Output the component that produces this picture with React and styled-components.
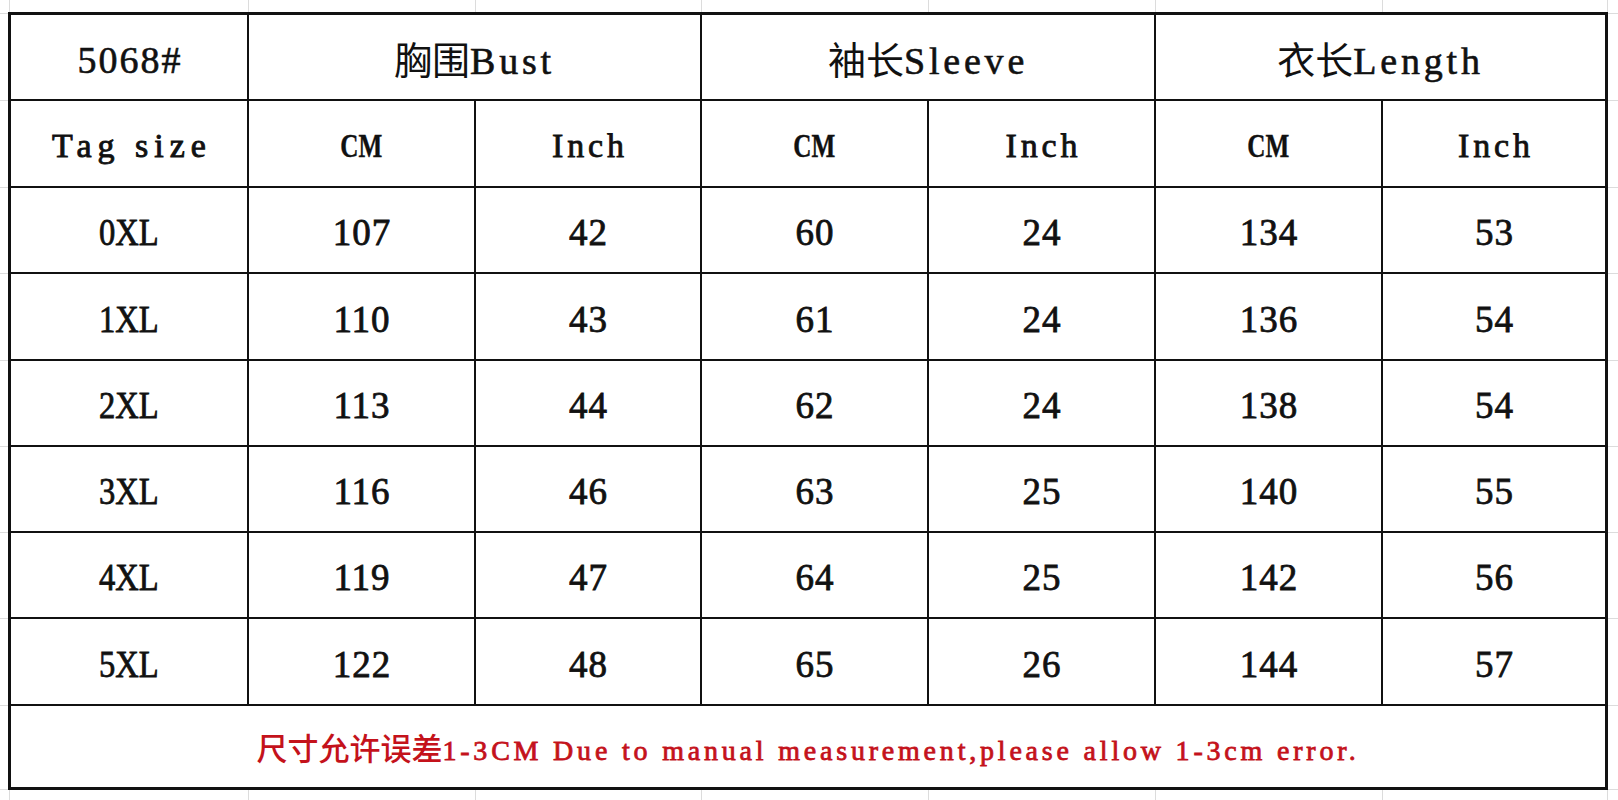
import React from "react";
import styled, { createGlobalStyle } from "styled-components";

const GlobalStyle = createGlobalStyle`
  html, body { margin: 0; padding: 0; background: #fff; }
  body { font-family: "Liberation Serif", "Noto Sans CJK SC", serif; color: #111; }
`;

const V_LINES = [9, 248, 475, 701, 928, 1155, 1382, 1607];
const H_LINES = [13, 100, 187, 273, 360, 446, 532, 618, 705, 789];
const GRID_COLOR = "#dcdcdc";

const lineGradient = (dir, list) =>
  `linear-gradient(${dir}, ${list
    .map(
      (p) =>
        `transparent ${p}px, ${GRID_COLOR} ${p}px, ${GRID_COLOR} ${p + 1}px, transparent ${p + 1}px`
    )
    .join(", ")})`;

const BG = `${lineGradient("to right", V_LINES)}, ${lineGradient("to bottom", H_LINES)}`;

const Page = styled.div`
  width: 1618px;
  height: 800px;
  box-sizing: border-box;
  padding: 12px 0 0 8px;
  overflow: hidden;
  background-color: #fff;
  background-image: ${BG};
`;

const Table = styled.div`
  display: inline-grid;
  grid-template-columns: 236px 225px 224px 225px 225px 225px 222px;
  grid-template-rows: 84px 85px 84px 85px 84px 84px 84px 85px 81px;
  gap: 2px;
  background: #111;
  border: 3px solid #111;
`;

const Cell = styled.div`
  grid-column: span ${(p) => p.$span || 1};
  background: #fff;
  display: flex;
  align-items: center;
  justify-content: center;
  padding-top: ${(p) => p.$drop ?? 5}px;
  box-sizing: border-box;
  white-space: nowrap;
`;

const Label = styled.span`
  display: block;
  line-height: 1;
  white-space: pre;
  color: ${(p) => p.$color || "#111"};
`;

const Latin = styled.span`
  display: inline-block;
  font-family: "Liberation Serif", "Times New Roman", serif;
  font-size: ${(p) => p.$size || 37}px;
  font-weight: ${(p) => (p.$bold ? 700 : 400)};
  letter-spacing: ${(p) => p.$track || 0}px;
  padding-left: ${(p) => (p.$center ? p.$track || 0 : 0)}px;
  -webkit-text-stroke: ${(p) => p.$stroke ?? 0.8}px currentColor;
  transform: scaleX(${(p) => p.$narrow || 1});
  margin: 0 ${(p) => p.$pull || 0}px;
  line-height: 1;
  white-space: pre;
`;

const Han = styled.span`
  font-family: "Noto Sans CJK SC", sans-serif;
  font-size: ${(p) => p.$size || 36}px;
  font-weight: ${(p) => p.$weight || 400};
  line-height: 1;
`;

const groups = [
  { han: "胸围", latin: "Bust" },
  { han: "袖长", latin: "Sleeve" },
  { han: "衣长", latin: "Length" },
];

const rows = [
  ["0XL", 107, 42, 60, 24, 134, 53],
  ["1XL", 110, 43, 61, 24, 136, 54],
  ["2XL", 113, 44, 62, 24, 138, 54],
  ["3XL", 116, 46, 63, 25, 140, 55],
  ["4XL", 119, 47, 64, 25, 142, 56],
  ["5XL", 122, 48, 65, 26, 144, 57],
];

export default function App() {
  return (
    <>
      <GlobalStyle />
      <Page>
        <Table>
          <Cell>
            <Label>
              <Latin $size={38} $track={2} $center $stroke={0.6}>5068#</Latin>
            </Label>
          </Cell>
          {groups.map((g) => (
            <Cell key={g.latin} $span={2}>
              <Label>
                <Han $size={38}>{g.han}</Han>
                <Latin $size={38} $track={3.8} $stroke={0.6}>{g.latin}</Latin>
              </Label>
            </Cell>
          ))}

          <Cell>
            <Label>
              <Latin $size={34} $track={6} $center $stroke={0.9}>Tag size</Latin>
            </Label>
          </Cell>
          {groups.map((g) => (
            <React.Fragment key={g.latin + "-units"}>
              <Cell>
                <Label>
                  <Latin $size={34} $bold $narrow={0.74} $stroke={0.4} $pull={-7}>CM</Latin>
                </Label>
              </Cell>
              <Cell>
                <Label>
                  <Latin $size={34} $track={3.8} $center $stroke={0.8}>Inch</Latin>
                </Label>
              </Cell>
            </React.Fragment>
          ))}

          {rows.map((r) =>
            r.map((v, i) => (
              <Cell key={r[0] + "-" + i}>
                <Label>
                  {i === 0 ? (
                    <Latin $size={37} $narrow={0.88} $pull={-4}>{v}</Latin>
                  ) : (
                    <Latin $size={37} $track={1} $center>{String(v)}</Latin>
                  )}
                </Label>
              </Cell>
            ))
          )}

          <Cell $span={7} $drop={3}>
            <Label $color="#c4121b">
              <Han $size={31} $weight={500}>尺寸允许误差</Han>
              <Latin $size={28} $track={3.8} $stroke={0.8}>
                1-3CM Due to manual measurement,please allow 1-3cm error.
              </Latin>
            </Label>
          </Cell>
        </Table>
      </Page>
    </>
  );
}
